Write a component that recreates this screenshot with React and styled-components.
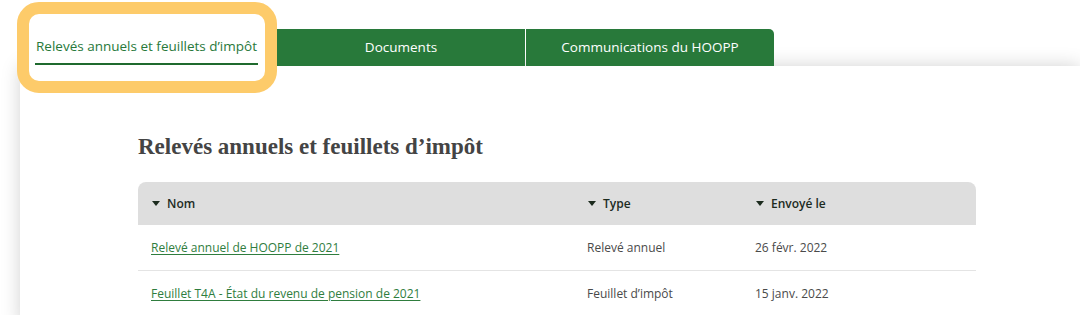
import React from "react";
import styled, { createGlobalStyle } from "styled-components";

const GlobalStyle = createGlobalStyle`
  html, body {
    margin: 0;
    padding: 0;
    background: #ffffff;
  }
  body {
    font-family: "Open Sans", "Liberation Sans", sans-serif;
    overflow: hidden;
  }
`;

const Page = styled.div`
  position: relative;
  width: 1080px;
  height: 315px;
  padding-top: 29px;
  box-sizing: border-box;
  overflow: hidden;
`;

const TabBar = styled.div`
  position: relative;
  z-index: 2;
  display: flex;
  gap: 1px;
  margin-left: 28px;
  height: 37px;
`;

const Tab = styled.div`
  flex: 0 0 248px;
  display: flex;
  align-items: center;
  justify-content: ${(p) => (p.$active ? "flex-start" : "center")};
  padding-left: ${(p) => (p.$active ? "7px" : "0")};
  padding-bottom: ${(p) => (p.$active ? "0" : "2px")};
  box-sizing: border-box;
  background: ${(p) => (p.$active ? "#ffffff" : "#28793a")};
  color: ${(p) => (p.$active ? "#28793a" : "#ffffff")};
  font-size: 13.5px;
  border-top-right-radius: ${(p) => (p.$last ? "5px" : "0")};
`;

const ActiveLabel = styled.span`
  display: inline-flex;
  align-items: center;
  height: 35px;
  padding: 0 1px 2px;
  box-sizing: border-box;
  border-bottom: 2px solid #1f6a2e;
`;

const Highlight = styled.div`
  position: absolute;
  z-index: 3;
  left: 17px;
  top: 2px;
  width: 260px;
  height: 91px;
  box-sizing: border-box;
  border: 12px solid #fdcb6a;
  border-radius: 22px;
  pointer-events: none;
`;

const Card = styled.section`
  position: relative;
  z-index: 1;
  margin-left: 20px;
  height: 260px;
  background: #ffffff;
  box-shadow: 0 0 18px rgba(0, 0, 0, 0.18);
  padding: 66px 0 0 118px;
  box-sizing: border-box;
`;

const Heading = styled.h2`
  margin: 0 0 20px;
  font-family: "Liberation Serif", "DejaVu Serif", serif;
  font-weight: 700;
  font-size: 23px;
  line-height: 30px;
  color: #444444;
`;

const Table = styled.div`
  width: 838px;
`;

const HeaderRow = styled.div`
  display: grid;
  grid-template-columns: 436px 168px 1fr;
  height: 43px;
  align-items: center;
  background: #dedede;
  border-radius: 8px 8px 0 0;
`;

const HeaderCell = styled.div`
  display: flex;
  align-items: center;
  gap: 7px;
  padding-left: 14px;
  font-size: 12px;
  font-weight: 600;
  color: #1c2b1e;
`;

const Caret = styled.span`
  width: 0;
  height: 0;
  border-left: 4px solid transparent;
  border-right: 4px solid transparent;
  border-top: 5px solid #1c2b1e;
`;

const Row = styled.div`
  display: grid;
  grid-template-columns: 436px 168px 1fr;
  height: 45px;
  align-items: center;
  border-bottom: 1px solid #e4e4e4;
`;

const Cell = styled.div`
  padding-left: 13px;
  font-size: 12px;
  color: #4a4a4a;
`;

const DocLink = styled.a`
  color: #2f7d3e;
  text-decoration: underline;
  text-underline-offset: 2px;
  cursor: pointer;
`;

const columns = ["Nom", "Type", "Envoyé le"];

const rows = [
  { name: "Relevé annuel de HOOPP de 2021", type: "Relevé annuel", date: "26 févr. 2022" },
  { name: "Feuillet T4A - État du revenu de pension de 2021", type: "Feuillet d’impôt", date: "15 janv. 2022" },
];

export default function App() {
  return (
    <Page>
      <GlobalStyle />
      <Highlight />
      <TabBar>
        <Tab $active>
          <ActiveLabel>Relevés annuels et feuillets d’impôt</ActiveLabel>
        </Tab>
        <Tab>Documents</Tab>
        <Tab $last>Communications du HOOPP</Tab>
      </TabBar>
      <Card>
        <Heading>Relevés annuels et feuillets d’impôt</Heading>
        <Table>
          <HeaderRow>
            {columns.map((c) => (
              <HeaderCell key={c}>
                <Caret />
                {c}
              </HeaderCell>
            ))}
          </HeaderRow>
          {rows.map((r) => (
            <Row key={r.name}>
              <Cell>
                <DocLink>{r.name}</DocLink>
              </Cell>
              <Cell>{r.type}</Cell>
              <Cell>{r.date}</Cell>
            </Row>
          ))}
        </Table>
      </Card>
    </Page>
  );
}
